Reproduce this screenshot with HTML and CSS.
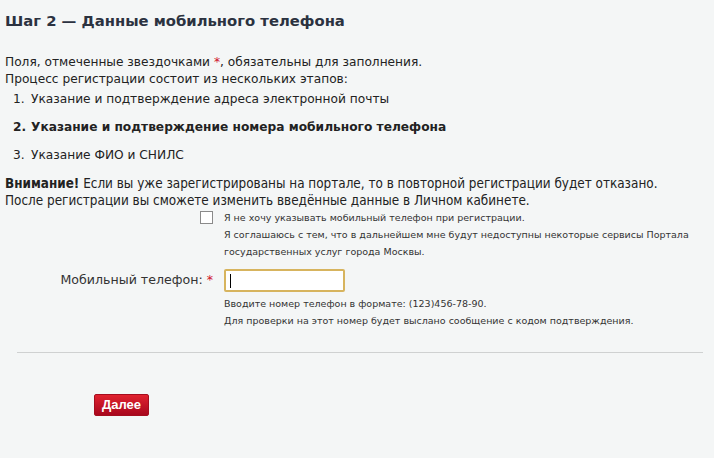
FILE: index.html
```html
<!DOCTYPE html>
<html lang="ru">
<head>
    <meta charset="UTF-8">
    <title>Шаг 2 — Данные мобильного телефона</title>
    <link rel="stylesheet" href="styles.css">
</head>
<body>
    <div class="page">
        <h2 class="step-title">Шаг 2 — Данные мобильного телефона</h2>

        <p class="intro">Поля, отмеченные звездочками <span class="req">*</span>, обязательны для заполнения.<br>
        Процесс регистрации состоит из нескольких этапов:</p>

        <ol class="steps">
            <li>Указание и подтверждение адреса электронной почты</li>
            <li class="current">Указание и подтверждение номера мобильного телефона</li>
            <li>Указание ФИО и СНИЛС</li>
        </ol>

        <p class="warning"><b>Внимание!</b> Если вы уже зарегистрированы на портале, то в повторной регистрации будет отказано.<br>
        После регистрации вы сможете изменить введённые данные в Личном кабинете.</p>

        <div class="form-row">
            <div class="form-label">
                <input type="checkbox" id="no-phone" class="checkbox">
            </div>
            <label for="no-phone" class="form-note">
                Я не хочу указывать мобильный телефон при регистрации.<br>
                Я соглашаюсь с тем, что в дальнейшем мне будут недоступны некоторые сервисы Портала государственных услуг города Москвы.
            </label>
        </div>

        <div class="form-row phone-row">
            <label class="form-label" for="phone">Мобильный телефон: <span class="req">*</span></label>
            <div class="form-field">
                <input type="text" id="phone" class="text-input focused" autofocus>
                <div class="form-note">
                    Вводите номер телефон в формате: (123)456-78-90.<br>
                    Для проверки на этот номер будет выслано сообщение с кодом подтверждения.
                </div>
            </div>
        </div>

        <hr class="divider">

        <div class="actions">
            <button class="btn-next">Далее</button>
        </div>
    </div>
</body>
</html>
```

FILE: styles.css
```css
* {
    margin: 0;
    padding: 0;
    box-sizing: border-box;
}

body {
    background-color: #f4f6f6;
    font-family: 'DejaVu Sans', Verdana, sans-serif;
    font-size: 12.2px;
    color: #222;
}

.page {
    padding: 10px 11px 0 5px;
}

.step-title {
    font-size: 14.8px;
    font-weight: bold;
    color: #2b3240;
    line-height: 22px;
    margin-bottom: 22px;
}

.req {
    color: #d0102a;
}

.intro {
    line-height: 17px;
}

.steps {
    list-style: none;
    counter-reset: step;
    margin-left: 8px;
    margin-top: 1px;
}

.steps li {
    counter-increment: step;
    line-height: 17px;
    padding: 2px 0 9px;
}

.steps li::before {
    content: counter(step) ".";
    display: inline-block;
    width: 18px;
}

.steps li.current {
    font-weight: bold;
}

.warning {
    margin-top: 2px;
    font-stretch: condensed;
    font-size: 13.4px;
    line-height: 17px;
}

.form-row {
    display: flex;
    gap: 11px;
}

.form-label {
    width: 208px;
    flex-shrink: 0;
    text-align: right;
    font-size: 12.6px;
    color: #333;
}

.checkbox {
    appearance: none;
    width: 13px;
    height: 13px;
    border: 1px solid #8a8a8a;
    background: #fff;
    margin-top: 2px;
}

.form-note {
    font-size: 9.5px;
    line-height: 17px;
    color: #333;
    max-width: 465px;
}

.phone-row {
    margin-top: 9px;
}

.phone-row .form-label {
    padding-top: 3px;
}

.text-input {
    display: block;
    width: 121px;
    height: 23px;
    border: 2px solid #d7b45e;
    border-radius: 2px;
    background: #fff;
    outline: none;
    margin-bottom: 3px;
    font-size: 13px;
    caret-color: #000;
}

/* курсор в активном поле */
.text-input.focused {
    background: #fff linear-gradient(#000, #000) no-repeat 4px 3px / 1px 14px;
}

.divider {
    border: none;
    border-top: 1px solid #cfd1d1;
    margin: 23px 0 0 12px;
}

.actions {
    padding: 41px 0 0 89px;
}

.btn-next {
    font-family: 'Liberation Sans Narrow', 'Liberation Sans', sans-serif;
    font-stretch: condensed;
    font-size: 13px;
    font-weight: bold;
    color: #fff;
    padding: 2px 7px 3px;
    border: 1px solid #a50d1e;
    border-radius: 2px;
    background: linear-gradient(#e0222f, #a8071d);
    cursor: pointer;
}
```
